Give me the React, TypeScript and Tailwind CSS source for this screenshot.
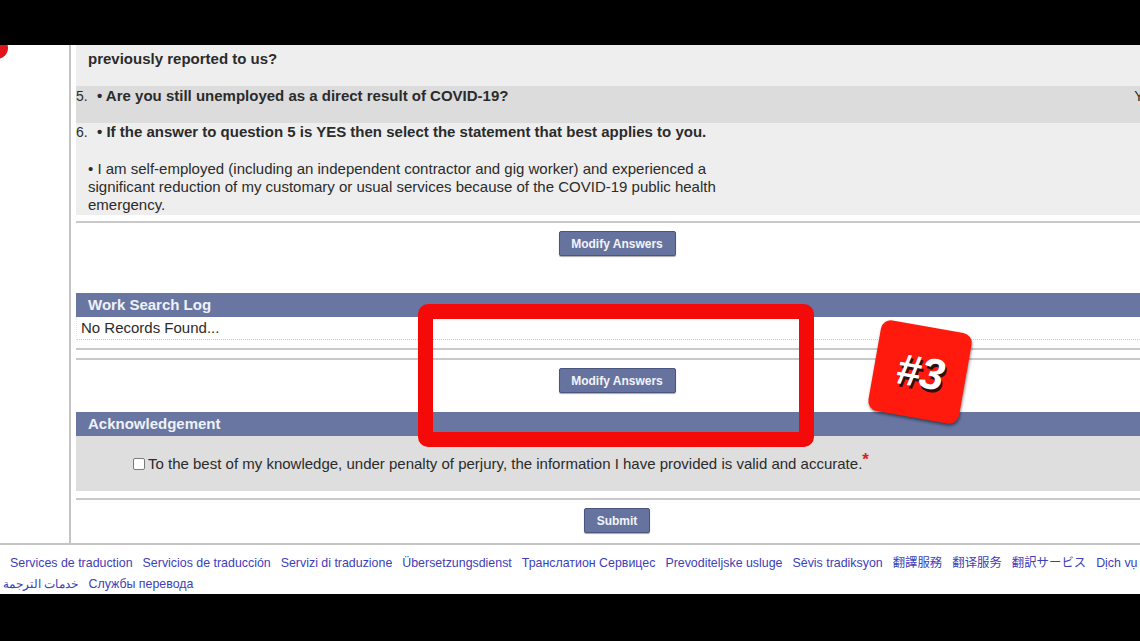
import React from "react";

function Btn({ children, w }: { children: React.ReactNode; w: string }) {
  return (
    <div className="flex justify-center">
      <div
        className={`${w} h-[25px] flex items-center justify-center bg-[#66739f] border border-[#4a5580] rounded-[2px] shadow-[0_1px_1px_rgba(0,0,0,0.35)] text-[12px] font-bold text-[#f2f4fa]`}
      >
        {children}
      </div>
    </div>
  );
}

function Rule() {
  return <div className="h-[2px] bg-[#c9c9c9]" />;
}

function Header({ children }: { children: React.ReactNode }) {
  return (
    <div className="h-[24px] bg-[#6976a2] pl-[12px] flex items-center text-[15px] font-bold text-[#eef1f8]">
      {children}
    </div>
  );
}

const row1 = [
  "Services de traduction",
  "Servicios de traducción",
  "Servizi di traduzione",
  "Übersetzungsdienst",
  "Транслатион Сервицес",
  "Prevoditeljske usluge",
  "Sèvis tradiksyon",
  "翻譯服務",
  "翻译服务",
  "翻訳サービス",
  "Dịch vụ dịch thuật",
];

export default function App() {
  return (
    <div className="relative w-[1140px] h-[641px] overflow-hidden bg-black flex flex-col font-['Liberation_Sans','Noto_Sans_CJK_SC',Arial,sans-serif] text-[#2b2b2b]">
      <div className="h-[45px] shrink-0 bg-black" />
      <div className="relative h-[549px] shrink-0 bg-white overflow-hidden flex flex-col">
        <div className="absolute left-[-14px] top-[-8px] w-[22px] h-[22px] rounded-full bg-[#e0141a]" />
        <div className="flex h-[498px] shrink-0">
          <div className="w-[71px] shrink-0 border-r-2 border-[#c4c4c4]" />
          <div className="ml-[5px] w-[1082px] shrink-0 flex flex-col">
            <div className="h-[41px] bg-[#eeeeee] pl-[12px] pt-[5px] text-[15px] font-bold leading-[18px]">
              previously reported to us?
            </div>
            <div className="h-[37px] bg-[#dcdcdc] pt-[1px] flex justify-between leading-[18px]">
              <div className="flex">
                <span className="text-[14px] w-[21px]">5.</span>
                <span className="text-[15px] font-bold">• Are you still unemployed as a direct result of COVID-19?</span>
              </div>
              <span className="text-[14px] pr-[1px]">Yes</span>
            </div>
            <div className="h-[92px] bg-[#eeeeee] leading-[18px]">
              <div className="flex">
                <span className="text-[14px] w-[21px]">6.</span>
                <span className="text-[15px] font-bold">
                  • If the answer to question 5 is YES then select the statement that best applies to you.
                </span>
              </div>
              <div className="mt-[19px] pl-[12px] text-[15px] whitespace-nowrap">
                • I am self-employed (including an independent contractor and gig worker) and experienced a
                <br />
                significant reduction of my customary or usual services because of the COVID-19 public health
                <br />
                emergency.
              </div>
            </div>
            <div className="h-[6px]" />
            <Rule />
            <div className="h-[8px]" />
            <Btn w="w-[117px]">Modify Answers</Btn>
            <div className="h-[37px]" />
            <Header>Work Search Log</Header>
            <div className="h-[23px] pl-[4px] flex items-center text-[15px] border-b border-dotted border-[#c8c8c8] border-l border-l-[#e2e2e2]">
              No Records Found...
            </div>
            <div className="h-[8px]" />
            <Rule />
            <div className="h-[8px]" />
            <Rule />
            <div className="h-[8px]" />
            <Btn w="w-[117px]">Modify Answers</Btn>
            <div className="h-[19px]" />
            <Header>Acknowledgement</Header>
            <div className="h-[55px] bg-[#dedede] pl-[57px] flex items-center text-[15px]">
              <span className="w-[12px] h-[12px] border border-[#7a7a7a] bg-white rounded-[2px] mr-[3px]" />
              <span>
                To the best of my knowledge, under penalty of perjury, the information I have provided is valid and accurate.
                <span className="text-[#e01b1b] font-bold text-[17px] relative top-[-4px]">*</span>
              </span>
            </div>
            <div className="h-[7px]" />
            <Rule />
            <div className="h-[8px]" />
            <Btn w="w-[66px]">Submit</Btn>
          </div>
        </div>
        <div className="h-[2px] shrink-0 bg-[#c4c4c4]" />
        <div className="pt-[8px] text-[12.4px] leading-[21px] text-[#3c40b8]">
          <div className="flex gap-[10px] pl-[10px] whitespace-nowrap">
            {row1.map((t) => (
              <span key={t}>{t}</span>
            ))}
          </div>
          <div className="flex gap-[10px] pl-[3px] whitespace-nowrap">
            <span dir="rtl">خدمات الترجمة</span>
            <span>Службы перевода</span>
          </div>
        </div>
      </div>
      <div className="flex-1 bg-black" />

      <div className="absolute left-[418px] top-[304px] w-[396px] h-[143px] border-[15px] border-[#f50a0a] rounded-[10px]" />
      <div className="absolute left-[874px] top-[326px] w-[92px] h-[92px] rotate-[10deg] rounded-[10px] bg-[#ff1a0d] shadow-[1px_2px_3px_rgba(0,0,0,0.45)] flex items-center justify-center">
        <span className="text-[44px] font-bold italic text-white font-['Liberation_Sans',Arial,sans-serif] [text-shadow:2px_3px_0_#2a1010] tracking-[-1px]">
          #3
        </span>
      </div>
    </div>
  );
}
